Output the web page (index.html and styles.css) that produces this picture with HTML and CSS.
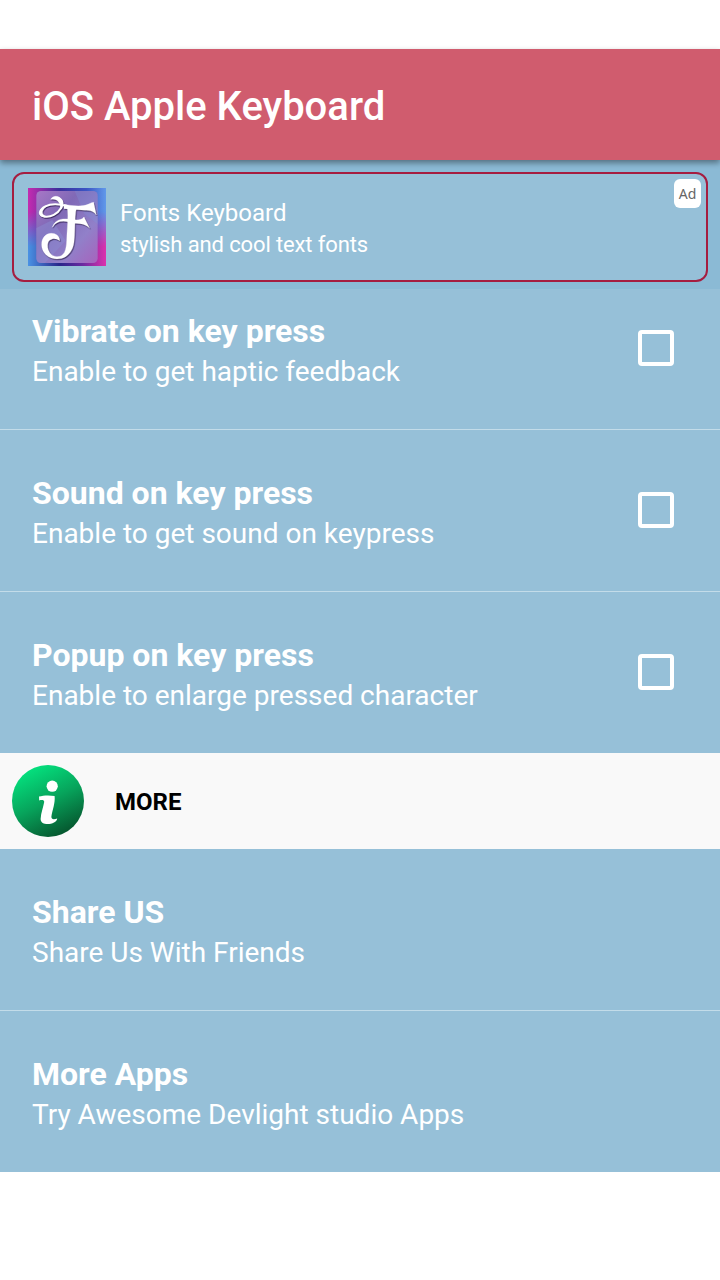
FILE: index.html
```html
<!DOCTYPE html>
<html lang="en">
<head>
    <meta charset="UTF-8">
    <meta name="viewport" content="width=device-width, initial-scale=1.0">
    <title>iOS Apple Keyboard</title>
    <link rel="stylesheet" href="styles.css">
</head>
<body>
    <header class="toolbar">
        <h1>iOS Apple Keyboard</h1>
    </header>

    <div class="ad-container">
        <div class="ad-card">
            <svg class="ad-icon" viewBox="0 0 234 234">
                <defs>
                    <linearGradient id="adBase" x1="0" y1="0" x2="1" y2="0">
                        <stop offset="0" stop-color="#c42bb0"/>
                        <stop offset="0.4" stop-color="#3a2f9c"/>
                        <stop offset="0.75" stop-color="#3b55c4"/>
                        <stop offset="1" stop-color="#6199ea"/>
                    </linearGradient>
                    <linearGradient id="adLower" x1="0" y1="0" x2="1" y2="0">
                        <stop offset="0" stop-color="#4a92e4"/>
                        <stop offset="0.4" stop-color="#28268a"/>
                        <stop offset="0.7" stop-color="#6a2aa0"/>
                        <stop offset="1" stop-color="#dc32ad"/>
                    </linearGradient>
                    <linearGradient id="adFade" x1="0" y1="0" x2="0" y2="1">
                        <stop offset="0.3" stop-color="#000"/>
                        <stop offset="0.75" stop-color="#fff"/>
                    </linearGradient>
                    <linearGradient id="adPanel" x1="0" y1="0" x2="1" y2="1">
                        <stop offset="0" stop-color="#a777c6"/>
                        <stop offset="0.35" stop-color="#8069b6"/>
                        <stop offset="0.7" stop-color="#9180c9"/>
                        <stop offset="1" stop-color="#a763bd"/>
                    </linearGradient>
                    <mask id="adMask"><rect width="234" height="234" fill="url(#adFade)"/></mask>
                </defs>
                <rect width="234" height="234" fill="url(#adBase)"/>
                <rect width="234" height="234" fill="url(#adLower)" mask="url(#adMask)"/>
                <rect x="25" y="9" width="184" height="216" rx="14" fill="url(#adPanel)"/>
                <path d="M140 9h55q14 0 14 14v85l-40-30z" fill="#7d92dc" opacity="0.3"/>
                <path d="M25 120l48-24 40 62-62 67H39q-14 0-14-14z" fill="#8b8bd2" opacity="0.5"/>
                <g class="ad-letter">
                    <!-- upper swirl -->
                    <path class="hairline" d="M80 29C101 28 108 43 99 60C89 78 68 89 50 86C30 81 34 64 52 55C70 46 94 48 118 54"/>
                    <path d="M68 34C76 20 98 22 105 42C107 55 101 64 97 66C100 46 88 30 68 34Z"/>
                    <path d="M34 78C31 66 46 56 58 53C42 65 37 77 54 85C45 89 37 86 34 78Z"/>
                    <!-- top bar -->
                    <path d="M108 49C135 54 162 57 180 49C189 45 193 43 197 43L205 81C198 71 188 67 170 67L108 62Z"/>
                    <!-- stem and lower hook -->
                    <path d="M118 58L145 60C139 90 142 130 138 163C134 194 114 213 87 213C60 213 41 193 41 170C41 149 54 136 70 136C85 136 96 146 95 158C86 152 75 149 65 157C52 168 60 206 87 206C110 206 115 185 116 158C117 125 122 88 118 58Z"/>
                    <!-- crossbar -->
                    <path d="M73 118C80 96 100 90 125 94C147 97 159 98 168 87L185 121C174 110 162 107 141 106L122 102C100 97 84 101 73 118Z"/>
                </g>
            </svg>
            <div class="ad-text">
                <div class="ad-title">Fonts Keyboard</div>
                <div class="ad-desc">stylish and cool text fonts</div>
            </div>
            <span class="ad-badge">Ad</span>
        </div>
    </div>

    <main class="settings">
        <label class="item first">
            <div class="item-text">
                <div class="item-title">Vibrate on key press</div>
                <div class="item-summary">Enable to get haptic feedback</div>
            </div>
            <input type="checkbox" class="check">
        </label>
        <label class="item">
            <div class="item-text">
                <div class="item-title">Sound on key press</div>
                <div class="item-summary">Enable to get sound on keypress</div>
            </div>
            <input type="checkbox" class="check">
        </label>
        <label class="item last">
            <div class="item-text">
                <div class="item-title">Popup on key press</div>
                <div class="item-summary">Enable to enlarge pressed character</div>
            </div>
            <input type="checkbox" class="check">
        </label>

        <div class="section">
            <svg class="info-icon" viewBox="0 0 72 72">
                <defs>
                    <linearGradient id="infoGreen" x1="0.25" y1="0" x2="0.75" y2="1">
                        <stop offset="0" stop-color="#04e681"/>
                        <stop offset="0.5" stop-color="#07a35b"/>
                        <stop offset="1" stop-color="#064f2a"/>
                    </linearGradient>
                </defs>
                <circle cx="36" cy="36" r="36" fill="url(#infoGreen)"/>
                <circle cx="40.2" cy="21.2" r="5.6" fill="#fff"/>
                <path d="M27 31.6C31 30.4 37 30 42.6 31C43.4 38 40.4 45 39.4 51.5C39.2 54.6 42 54.6 45.2 53.4C45 59.6 28.6 62 28.6 54C29 47.4 31.4 42 32.2 37C32.2 34.8 30 34.8 27.2 35.4Z" fill="#fff"/>
            </svg>
            <span class="section-title">MORE</span>
        </div>

        <div class="item">
            <div class="item-text">
                <div class="item-title">Share US</div>
                <div class="item-summary">Share Us With Friends</div>
            </div>
        </div>
        <div class="item last">
            <div class="item-text">
                <div class="item-title">More Apps</div>
                <div class="item-summary">Try Awesome Devlight studio Apps</div>
            </div>
        </div>
    </main>
</body>
</html>
```
FILE: styles.css
```css
* {
    margin: 0;
    padding: 0;
    box-sizing: border-box;
}
body {
    font-family: Roboto, sans-serif;
    background: #fff;
    color: #fff;
    padding-top: 49px;
    overflow: hidden;
}
.toolbar {
    position: relative;
    z-index: 1;
    height: 111px;
    padding: 4px 32px 0;
    display: flex;
    align-items: center;
    background: #d05c6e;
    box-shadow: 0 3px 6px rgba(0, 0, 0, 0.4);
}
.toolbar h1 {
    font-size: 40px;
    font-weight: 500;
}
.ad-container {
    height: 129px;
    padding: 12px 12px 7px;
    background: #8bbad5;
}
.ad-card {
    position: relative;
    height: 110px;
    display: flex;
    align-items: center;
    gap: 14px;
    padding: 0 14px;
    background: #96c0d8;
    border: 2px solid #a51d40;
    border-radius: 12px;
}
.ad-icon {
    width: 78px;
    height: 78px;
}
.ad-letter {
    fill: #fff;
    stroke: #fff;
    stroke-width: 1;
    filter: drop-shadow(2px 3px 2px rgba(30, 15, 60, 0.7));
}
.ad-letter .hairline {
    fill: none;
    stroke-width: 6;
}
.ad-text {
    padding-top: 4px;
}
.ad-title {
    font-size: 24px;
    line-height: 32px;
}
.ad-desc {
    font-size: 22px;
    line-height: 32px;
    letter-spacing: -0.12px;
}
.ad-badge {
    position: absolute;
    top: 5px;
    right: 5px;
    width: 27px;
    height: 29px;
    border-radius: 6px;
    background: #fff;
    color: #666;
    font: 14px/30px "Noto Sans", sans-serif;
    text-align: center;
}
.settings {
    background: #96c0d8;
}
.item {
    height: 162px;
    padding: 0 46px 2px 32px;
    display: flex;
    align-items: center;
    justify-content: space-between;
    border-bottom: 1px solid #c3dce9;
}
.item.first {
    height: 141px;
    padding-bottom: 23px;
}
.item.last {
    height: 161px;
    border-bottom: none;
}
.item-text {
    padding-top: 5px;
}
.item-title {
    font-size: 32px;
    font-weight: bold;
    line-height: 42px;
}
.item-summary {
    font-size: 28px;
    line-height: 39px;
}
.check {
    appearance: none;
    width: 36px;
    height: 36px;
    border: 4px solid #fff;
    border-radius: 4px;
}
.section {
    height: 96px;
    padding: 0 12px;
    display: flex;
    align-items: center;
    gap: 31px;
    background: #f9f9f9;
    color: #000;
}
.info-icon {
    width: 72px;
    height: 72px;
}
.section-title {
    padding-top: 2px;
    font-size: 24px;
    font-weight: bold;
}
```
